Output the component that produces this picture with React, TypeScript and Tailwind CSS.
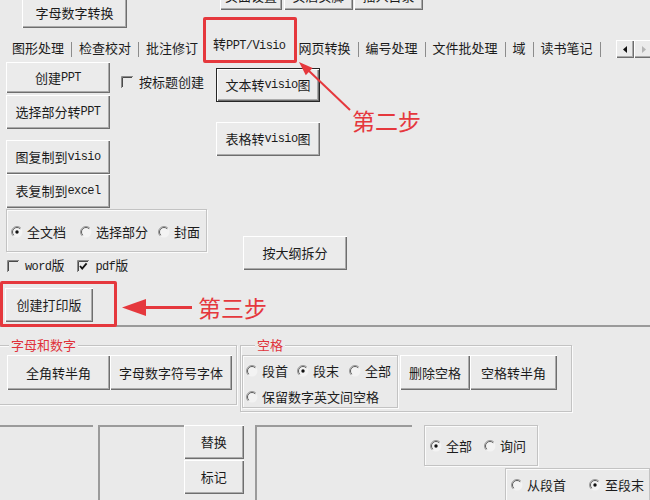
import type { ReactNode } from "react";

// Windows-classic look: raised buttons, etched frames, sunken text boxes.
const FACE =
  "bg-[#ebebeb] shadow-[inset_1px_1px_0_#ffffff,inset_-1px_-1px_0_#6e6e6e,inset_-2px_-2px_0_#ababab]";
const ETCHED =
  "border border-[#c3c3c3] shadow-[inset_1px_1px_0_#fbfbfb,1px_1px_0_#fbfbfb]";
const SUNKEN = "border-t-2 border-l-2 border-[#9b9b9b]";
const RED = "#e5383d";

function L({ children }: { children: ReactNode }) {
  return (
    <span className="font-['Liberation_Mono'] text-[12px] tracking-[-0.6px]">{children}</span>
  );
}

function Btn({
  className = "",
  children,
}: {
  className?: string;
  children?: ReactNode;
}) {
  return (
    <div
      className={`flex shrink-0 items-center justify-center whitespace-nowrap ${FACE} ${className}`}
    >
      {children}
    </div>
  );
}

function Radio({
  on = false,
  className = "",
  children,
}: {
  on?: boolean;
  className?: string;
  children: ReactNode;
}) {
  return (
    <span className={`flex h-[16px] items-center gap-[4px] whitespace-nowrap ${className}`}>
      <svg width="12" height="12" viewBox="0 0 12 12" aria-hidden>
        <circle cx="6" cy="6" r="5.5" fill="#f3f3f3" />
        <path d="M9.9 2.1 A5.5 5.5 0 0 0 2.1 9.9" fill="none" stroke="#9a9a9a" />
        <path d="M9.2 2.8 A4.5 4.5 0 0 0 2.8 9.2" fill="none" stroke="#5e5e5e" />
        {on && <circle cx="6" cy="6" r="1.7" fill="#111" />}
      </svg>
      {children}
    </span>
  );
}

function Check({
  on = false,
  className = "",
  children,
}: {
  on?: boolean;
  className?: string;
  children: ReactNode;
}) {
  return (
    <span className={`flex h-[16px] items-center gap-[6px] whitespace-nowrap ${className}`}>
      <svg width="12" height="12" viewBox="0 0 12 12" aria-hidden>
        <path d="M0.5 12 V0.5 H12" fill="none" stroke="#8a8a8a" />
        <path d="M1.5 11 V1.5 H11" fill="none" stroke="#4a4a4a" />
        {on && (
          <path d="M3 6 L5.2 8.6 L9.6 3.4" fill="none" stroke="#111" strokeWidth="1.8" />
        )}
      </svg>
      {children}
    </span>
  );
}

function Sep() {
  return <span className="mx-[7px] mb-[-1px] h-[15px] w-px shrink-0 bg-[#8c8c8c]" />;
}

export default function App() {
  return (
    <div className="relative flex h-[500px] w-[650px] flex-col overflow-hidden bg-[#eaeaea] font-['Noto_Sans_CJK_SC',sans-serif] text-[13px] leading-[16px] text-[#1c1c1c]">
      {/* top strip, buttons cut off by the window edge */}
      <div className="flex h-[30px] shrink-0 items-start">
        <Btn className="-mt-[12px] ml-[22px] h-[40px] w-[105px] pt-[10px]">字母数字转换</Btn>
        <div className="-mt-[20px] ml-[93px] flex">
          <Btn className="h-[30px] w-[62px] pt-[1px]">页面设置</Btn>
          <Btn className="ml-[2px] h-[30px] w-[69px] pt-[1px]">页眉页脚</Btn>
          <Btn className="ml-[1px] h-[30px] w-[69px] pt-[1px]">插入目录</Btn>
        </div>
      </div>

      {/* tab strip */}
      <div className="flex h-[32px] shrink-0 items-end pb-[6px] pl-[12px]">
        <span>图形处理</span>
        <Sep />
        <span>检查校对</span>
        <Sep />
        <span>批注修订</span>
        <span className="relative -top-[2px] ml-[15px] whitespace-nowrap">
          转<L>PPT/Visio</L>
        </span>
        <span className="ml-[13px]">网页转换</span>
        <Sep />
        <span>编号处理</span>
        <Sep />
        <span>文件批处理</span>
        <Sep />
        <span>域</span>
        <Sep />
        <span>读书笔记</span>
        <Sep />
        <div className="mr-[-2px] ml-auto mt-[10px] flex self-start">
          <div className={`flex h-[18px] w-[18px] items-center justify-center ${FACE}`}>
            <svg width="5" height="7" viewBox="0 0 5 7" aria-hidden>
              <path d="M4 0 L0 3.5 L4 7 Z" fill="#111" />
            </svg>
          </div>
          <div className={`flex h-[18px] w-[18px] items-center justify-center ${FACE}`}>
            <svg width="5" height="7" viewBox="0 0 5 7" aria-hidden>
              <path d="M1 0 L5 3.5 L1 7 Z" fill="#b5b5b5" />
            </svg>
          </div>
        </div>
      </div>

      {/* 转PPT/Visio tab page */}
      <div className="flex h-[265px] shrink-0 border-b-2 border-[#9a9a9a]">
        <div className="flex w-[216px] shrink-0 flex-col items-start pl-[6px]">
          <div className="flex items-start">
            <Btn className="h-[31px] w-[104px]">
              创建<L>PPT</L>
            </Btn>
            <Check className="ml-[11px] mt-[12px]">按标题创建</Check>
          </div>
          <Btn className="mt-[2px] h-[34px] w-[104px]">
            选择部分转<L>PPT</L>
          </Btn>
          <Btn className="mt-[11px] h-[34px] w-[104px]">
            图复制到<L>visio</L>
          </Btn>
          <Btn className="h-[34px] w-[104px]">
            表复制到<L>excel</L>
          </Btn>
          <div className={`mt-[1px] flex h-[43px] w-[201px] items-center pl-[4px] pt-[2px] ${ETCHED}`}>
            <Radio on>全文档</Radio>
            <Radio className="ml-[14px]">选择部分</Radio>
            <Radio className="ml-[10px]">封面</Radio>
          </div>
          <div className="ml-[1px] mt-[6px] flex items-center">
            <Check>
              <span>
                <L>word</L>版
              </span>
            </Check>
            <Check on className="ml-[13px]">
              <span>
                <L>pdf</L>版
              </span>
            </Check>
          </div>
          <Btn className="-ml-[1px] mt-[14px] h-[34px] w-[88px]">创建打印版</Btn>
        </div>

        <div className="flex flex-col items-start">
          <Btn className="mt-[6px] h-[34px] w-[104px] border border-[#262626]">
            文本转<L>visio</L>图
          </Btn>
          <Btn className="mt-[20px] h-[34px] w-[104px]">
            表格转<L>visio</L>图
          </Btn>
          <Btn className="ml-[27px] mt-[80px] h-[34px] w-[104px]">按大纲拆分</Btn>
        </div>
      </div>

      {/* lower frames */}
      <div className="mt-[18px] flex shrink-0 items-start">
        <div className={`relative -ml-[2px] h-[60px] w-[239px] ${ETCHED}`}>
          <span className="absolute -top-[9px] left-[10px] bg-[#eaeaea] px-[2px] text-[#e0333b]">
            字母和数字
          </span>
          <div className="flex pl-[8px] pt-[9px]">
            <Btn className="h-[35px] w-[103px]">全角转半角</Btn>
            <Btn className="h-[35px] w-[122px]">字母数字符号字体</Btn>
          </div>
        </div>

        <div className={`relative ml-[3px] h-[67px] w-[332px] ${ETCHED}`}>
          <span className="absolute -top-[9px] left-[14px] bg-[#eaeaea] px-[2px] text-[#e0333b]">
            空格
          </span>
          <div className="flex items-start pl-[1px] pt-[9px]">
            <div className={`flex h-[53px] w-[156px] flex-col pl-[3px] pt-[7px] ${ETCHED}`}>
              <div className="flex">
                <Radio>段首</Radio>
                <Radio on className="ml-[9px]">段末</Radio>
                <Radio className="ml-[10px]">全部</Radio>
              </div>
              <Radio className="mt-[10px]">保留数字英文间空格</Radio>
            </div>
            <Btn className="ml-[2px] h-[35px] w-[70px]">删除空格</Btn>
            <Btn className="h-[35px] w-[87px]">空格转半角</Btn>
          </div>
        </div>
      </div>

      <div className="mt-[13px] flex shrink-0 items-start">
        <div className={`-ml-[2px] h-[80px] w-[97px] ${SUNKEN}`} />
        <div className={`ml-[5px] h-[80px] w-[88px] ${SUNKEN}`} />
        <div className="flex w-[60px] flex-col">
          <Btn className="h-[34px] w-[60px]">替换</Btn>
          <Btn className="mt-[1px] h-[34px] w-[60px]">标记</Btn>
        </div>
        <div className={`ml-[11px] h-[80px] w-[161px] ${SUNKEN}`} />
        <div className="ml-[12px] flex flex-col">
          <div className={`flex h-[41px] w-[114px] items-center pl-[5px] ${ETCHED}`}>
            <Radio on>全部</Radio>
            <Radio className="ml-[12px]">询问</Radio>
          </div>
          <div className={`ml-[81px] mt-[2px] flex h-[40px] w-[145px] items-start pl-[5px] pt-[8px] ${ETCHED}`}>
            <Radio>从段首</Radio>
            <Radio on className="ml-[23px]">至段末</Radio>
          </div>
        </div>
      </div>

      {/* red annotations over the form */}
      <div className="pointer-events-none absolute left-[203px] top-[17px] h-[46px] w-[94px] rounded-[2px] border-[3px] border-[#e5383d]" />
      <div className="pointer-events-none absolute left-0 top-[281px] h-[46px] w-[117px] rounded-[2px] border-[3px] border-[#e5383d]" />
      <svg
        className="pointer-events-none absolute left-0 top-0"
        width="650"
        height="500"
        aria-hidden
      >
        <line x1="308" y1="70" x2="350" y2="110" stroke={RED} strokeWidth="2" />
        <polygon points="299,62 305.8,75.2 312.6,68" fill={RED} />
        <line x1="143" y1="307.5" x2="192" y2="307.5" stroke={RED} strokeWidth="3" />
        <polygon points="122,307.5 146,299 146,316" fill={RED} />
      </svg>
      <span className="pointer-events-none absolute left-[352px] top-[107px] text-[23px] leading-[26px] text-[#e5383d]">
        第二步
      </span>
      <span className="pointer-events-none absolute left-[198px] top-[294px] text-[23px] leading-[26px] text-[#e5383d]">
        第三步
      </span>
    </div>
  );
}
